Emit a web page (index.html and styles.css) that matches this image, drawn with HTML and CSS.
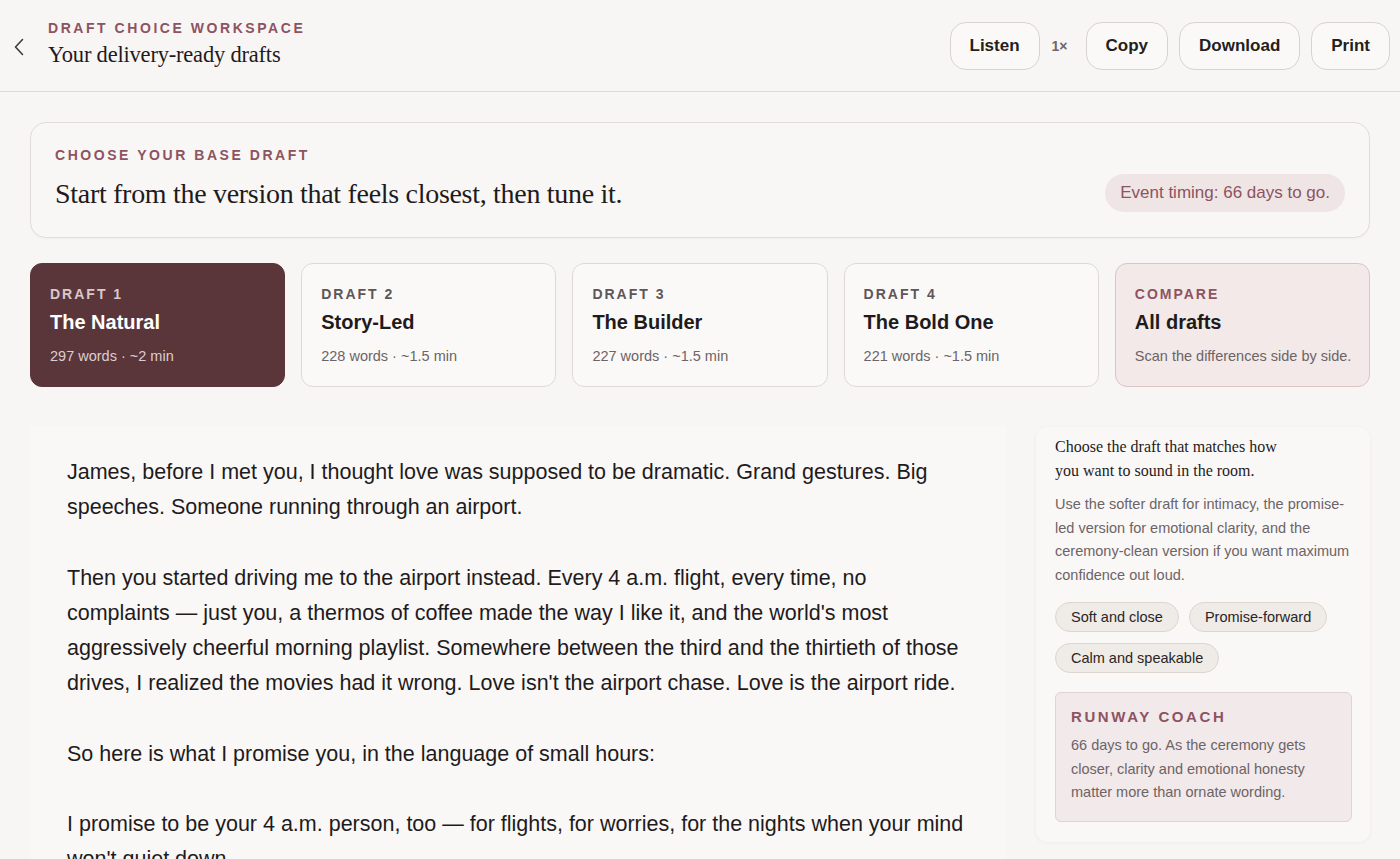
FILE: index.html
```html
<!DOCTYPE html>
<html lang="en">
<head>
<meta charset="utf-8">
<title>Draft Choice Workspace</title>
<link rel="stylesheet" href="styles.css">
</head>
<body>
<header class="topbar">
  <div class="top-left">
    <button class="back" aria-label="Back">
      <svg width="12" height="18" viewBox="0 0 12 18"><path d="M9.5 1.5 L2.5 9 L9.5 16.5" fill="none" stroke="#3d3a3b" stroke-width="1.6" stroke-linecap="round" stroke-linejoin="round"/></svg>
    </button>
    <div class="titles">
      <div class="eyebrow">DRAFT CHOICE WORKSPACE</div>
      <h1 class="page-title">Your delivery-ready drafts</h1>
    </div>
  </div>
  <div class="actions">
    <button class="btn">Listen</button>
    <span class="speed">1×</span>
    <button class="btn">Copy</button>
    <button class="btn">Download</button>
    <button class="btn">Print</button>
  </div>
</header>

<main class="content">
  <section class="intro">
    <div class="intro-text">
      <div class="eyebrow">CHOOSE YOUR BASE DRAFT</div>
      <h2 class="intro-title">Start from the version that feels closest, then tune it.</h2>
    </div>
    <div class="timing-pill">Event timing: 66 days to go.</div>
  </section>

  <div class="draft-tabs">
    <div class="draft-card selected">
      <div class="card-label">DRAFT 1</div>
      <div class="card-title">The Natural</div>
      <div class="card-meta">297 words · ~2 min</div>
    </div>
    <div class="draft-card">
      <div class="card-label">DRAFT 2</div>
      <div class="card-title">Story-Led</div>
      <div class="card-meta">228 words · ~1.5 min</div>
    </div>
    <div class="draft-card">
      <div class="card-label">DRAFT 3</div>
      <div class="card-title">The Builder</div>
      <div class="card-meta">227 words · ~1.5 min</div>
    </div>
    <div class="draft-card">
      <div class="card-label">DRAFT 4</div>
      <div class="card-title">The Bold One</div>
      <div class="card-meta">221 words · ~1.5 min</div>
    </div>
    <div class="draft-card compare">
      <div class="card-label">COMPARE</div>
      <div class="card-title">All drafts</div>
      <div class="card-meta">Scan the differences side by side.</div>
    </div>
  </div>

  <div class="workspace">
    <article class="draft-text">
      <p>James, before I met you, I thought love was supposed to be dramatic. Grand gestures. Big speeches. Someone running through an airport.</p>
      <p>Then you started driving me to the airport instead. Every 4 a.m. flight, every time, no complaints — just you, a thermos of coffee made the way I like it, and the world's most aggressively cheerful morning playlist. Somewhere between the third and the thirtieth of those drives, I realized the movies had it wrong. Love isn't the airport chase. Love is the airport ride.</p>
      <p>So here is what I promise you, in the language of small hours:</p>
      <p>I promise to be your 4 a.m. person, too — for flights, for worries, for the nights when your mind won't quiet down.</p>
    </article>

    <aside class="side">
      <h3 class="side-title">Choose the draft that matches how you want to sound in the room.</h3>
      <p class="side-copy">Use the softer draft for intimacy, the promise-led version for emotional clarity, and the ceremony-clean version if you want maximum confidence out loud.</p>
      <div class="chips">
        <span class="chip">Soft and close</span>
        <span class="chip">Promise-forward</span>
        <span class="chip">Calm and speakable</span>
      </div>
      <div class="coach">
        <div class="coach-title">RUNWAY COACH</div>
        <p class="coach-copy">66 days to go. As the ceremony gets closer, clarity and emotional honesty matter more than ornate wording.</p>
      </div>
    </aside>
  </div>
</main>
</body>
</html>
```

FILE: styles.css
```css
* { box-sizing: border-box; }

html, body {
  margin: 0;
  padding: 0;
  background: #f8f6f5;
  color: #231f20;
  font-family: "Liberation Sans", Arial, sans-serif;
  overflow: hidden;
}

button { font-family: inherit; }

.topbar {
  height: 92px;
  display: flex;
  align-items: center;
  justify-content: space-between;
  padding: 0 10px 0 12px;
  border-bottom: 1px solid #dedad7;
}

.top-left {
  display: flex;
  align-items: center;
  gap: 22px;
}

.back {
  border: 0;
  background: transparent;
  padding: 0;
  width: 14px;
  height: 20px;
  display: flex;
  align-items: center;
  justify-content: center;
  margin-top: 2px;
}

.titles {
  display: flex;
  flex-direction: column;
  margin-top: -2px;
}

.eyebrow {
  font-size: 14px;
  line-height: 17px;
  font-weight: 700;
  letter-spacing: 2.55px;
  color: #8d5361;
}

.page-title {
  margin: 4px 0 0;
  font-family: "Liberation Serif", "Times New Roman", serif;
  font-weight: 400;
  font-size: 22.5px;
  line-height: 28px;
  color: #1f1b1c;
  letter-spacing: -0.2px;
}

.actions {
  display: flex;
  align-items: center;
  gap: 11px;
}

.btn {
  height: 48px;
  padding: 0 19px;
  border: 1px solid #d9d3cf;
  border-radius: 16px;
  background: #faf9f8;
  font-size: 17px;
  font-weight: 700;
  color: #231f20;
}

.speed {
  font-size: 14px;
  font-weight: 700;
  color: #6f6769;
  padding: 0 7px 0 1px;
}

.content {
  padding: 30px 30px 0;
}

.intro {
  display: flex;
  align-items: flex-end;
  justify-content: space-between;
  padding: 24px 24px 24px 24px;
  border: 1px solid #e2ddda;
  border-radius: 16px;
  background: #f9f7f6;
  box-shadow: 0 1px 2px rgba(60, 40, 40, 0.04);
}

.intro-title {
  margin: 11px 0 0;
  font-family: "Liberation Serif", "Times New Roman", serif;
  font-weight: 400;
  font-size: 28px;
  line-height: 38px;
  color: #1f1b1c;
  letter-spacing: -0.3px;
}

.timing-pill {
  background: #efe5e5;
  color: #8d5361;
  font-size: 17px;
  line-height: 38px;
  height: 38px;
  padding: 0 15px;
  border-radius: 19px;
  margin-bottom: 1px;
}

.draft-tabs {
  display: grid;
  grid-template-columns: repeat(5, 1fr);
  gap: 16px;
  margin-top: 25px;
}

.draft-card {
  height: 124px;
  padding: 22px 12px 20px 19px;
  border: 1px solid #dfd9d6;
  border-radius: 12px;
  background: #faf9f8;
}

.card-label {
  font-size: 14px;
  line-height: 17px;
  font-weight: 700;
  letter-spacing: 2px;
  color: #5e5658;
}

.card-title {
  margin-top: 7px;
  font-size: 20px;
  line-height: 24px;
  font-weight: 700;
  color: #1f1b1c;
}

.card-meta {
  margin-top: 12px;
  font-size: 14.5px;
  line-height: 20px;
  color: #6c6466;
  white-space: nowrap;
}

.draft-card.selected {
  background: #5a363b;
  border-color: #5a363b;
}
.draft-card.selected .card-label { color: #d9c7ca; }
.draft-card.selected .card-title { color: #ffffff; }
.draft-card.selected .card-meta { color: #dccdcf; }

.draft-card.compare {
  background: #f2e9e8;
  border-color: #dcc4c6;
}
.draft-card.compare .card-label { color: #8d5361; }

.workspace {
  display: grid;
  grid-template-columns: 976px 334px;
  gap: 30px;
  margin-top: 40px;
  align-items: start;
}

.draft-text {
  padding: 28px 37px 0;
  background: #f9f8f7;
  min-height: 440px;
}

.draft-text p {
  margin: 0 0 35.2px;
  font-size: 21.5px;
  line-height: 35.2px;
  color: #1f1b1c;
}

.side {
  padding: 8px 18px 20px 19px;
  background: #faf8f7;
  border-radius: 12px;
  box-shadow: 0 1px 4px rgba(60, 40, 40, 0.05);
}

.side-title {
  margin: 0;
  max-width: 235px;
  font-family: "Liberation Serif", "Times New Roman", serif;
  font-weight: 400;
  font-size: 16px;
  line-height: 24px;
  color: #1f1b1c;
}

.side-copy {
  margin: 10px 0 15px;
  font-size: 14.5px;
  line-height: 23.5px;
  color: #6c6466;
}

.chips {
  display: flex;
  flex-wrap: wrap;
  gap: 11px 10px;
}

.chip {
  height: 30px;
  line-height: 28px;
  padding: 0 15px;
  border: 1px solid #ddd5cf;
  border-radius: 15px;
  background: #efebe6;
  font-size: 14.5px;
  color: #2a2526;
}

.coach {
  margin-top: 19px;
  padding: 15px 15px 16px;
  border: 1px solid #e0d2d5;
  border-radius: 6px;
  background: #f2e9ea;
}

.coach-title {
  font-size: 15px;
  line-height: 18px;
  font-weight: 700;
  letter-spacing: 2.6px;
  color: #8d5361;
}

.coach-copy {
  margin: 8px 0 0;
  font-size: 14.5px;
  line-height: 23.5px;
  color: #6c6466;
}
```
